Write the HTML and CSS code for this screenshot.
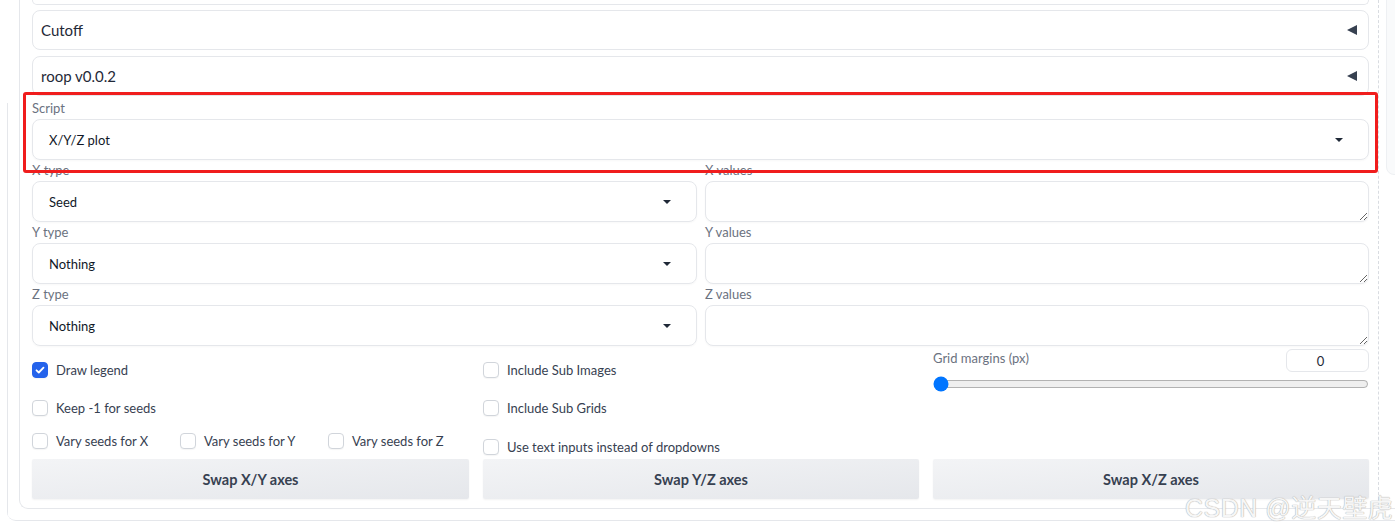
FILE: index.html
```html
<!DOCTYPE html>
<html lang="en">
<head>
    <meta charset="UTF-8">
    <meta name="viewport" content="width=device-width, initial-scale=1.0">
    <title>X/Y/Z plot</title>
    <link rel="stylesheet" href="styles.css">
</head>
<body>
    <div class="side-panel"></div>
    <div class="frame">
        <div class="panel">
            <div class="col">
                <div class="acc acc-cut"></div>
                <div class="acc"><span>Cutoff</span><i class="tri"></i></div>
                <div class="acc"><span>roop v0.0.2</span><i class="tri"></i></div>

                <div class="field script">
                    <label>Script</label>
                    <div class="select">X/Y/Z plot<i class="caret"></i></div>
                </div>

                <div class="axes">
                    <div class="field">
                        <label>X type</label>
                        <div class="select">Seed<i class="caret"></i></div>
                    </div>
                    <div class="field">
                        <label>X values</label>
                        <textarea></textarea>
                    </div>
                    <div class="field">
                        <label>Y type</label>
                        <div class="select">Nothing<i class="caret"></i></div>
                    </div>
                    <div class="field">
                        <label>Y values</label>
                        <textarea></textarea>
                    </div>
                    <div class="field">
                        <label>Z type</label>
                        <div class="select">Nothing<i class="caret"></i></div>
                    </div>
                    <div class="field">
                        <label>Z values</label>
                        <textarea></textarea>
                    </div>
                </div>

                <div class="options">
                    <div class="opt-col">
                        <div class="check"><span class="box checked"><svg viewBox="0 0 16 16" width="16" height="16"><path d="M4.5 8.3l2.3 2.2 4.7-4.8" fill="none" stroke="#fff" stroke-width="1.8" stroke-linecap="round" stroke-linejoin="round"/></svg></span>Draw legend</div>
                        <div class="check"><span class="box"></span>Keep -1 for seeds</div>
                        <div class="check-row">
                            <div class="check short"><span class="box"></span>Vary seeds for X</div>
                            <div class="check short"><span class="box"></span>Vary seeds for Y</div>
                            <div class="check short"><span class="box"></span>Vary seeds for Z</div>
                        </div>
                    </div>
                    <div class="opt-col">
                        <div class="check"><span class="box"></span>Include Sub Images</div>
                        <div class="check"><span class="box"></span>Include Sub Grids</div>
                        <div class="check last"><span class="box"></span>Use text inputs instead of dropdowns</div>
                    </div>
                    <div class="opt-col">
                        <div class="slider-head">
                            <label>Grid margins (px)</label>
                            <input type="number" value="0" class="num">
                        </div>
                        <input type="range" min="0" max="500" value="0" class="range">
                    </div>
                </div>

                <div class="buttons">
                    <button>Swap X/Y axes</button>
                    <button>Swap Y/Z axes</button>
                    <button>Swap X/Z axes</button>
                </div>
            </div>
        </div>
    </div>

    <div class="highlight"></div>
    <div class="watermark">CSDN @逆天壁虎</div>
</body>
</html>
```

FILE: styles.css
```css
*,
*:before,
*:after{
    box-sizing: border-box;
}

html, body{
    margin: 0;
    padding: 0;
    height: 100%;
}

body{
    position: relative;
    overflow: hidden;
    background: #fff;
    font-family: Lato, "Noto Sans", sans-serif;
    font-size: 14px;
    color: #374151;
}

.side-panel{
    position: absolute;
    top: -10px;
    left: 1386px;
    width: 40px;
    height: 185px;
    background: #f9fafb;
    border: 1px solid #eef0f3;
    border-radius: 8px;
}

.frame{
    margin-left: 7px;
    width: 1420px;
    height: 521px;
    padding: 0 0 11px 12px;
    border-bottom: 1px solid #e5e7eb;
    border-radius: 0 0 0 9px;
    background: linear-gradient(#e5e7eb, #e5e7eb) 0 103px / 1px 100% no-repeat;
}

.panel{
    height: 100%;
    border-left: 1px solid #e5e7eb;
    border-bottom: 1px solid #e5e7eb;
    border-radius: 0 0 0 9px;
    padding: 0 0 8px 12px;
}

.col{
    width: 1347px;
    height: 100%;
    padding-right: 9px;
    border-right: 1px dashed #d9dce1;
}

/* accordions */
.acc{
    display: flex;
    align-items: center;
    justify-content: space-between;
    height: 40px;
    margin-bottom: 6px;
    padding: 0 11px 0 8px;
    border: 1px solid #e5e7eb;
    border-radius: 8px;
    font-size: 15px;
    color: #1f2937;
}

.acc-cut{
    height: 5px;
    border-top: none;
    border-radius: 0 0 8px 8px;
    margin-bottom: 5px;
}

.tri{
    width: 0;
    height: 0;
    border-top: 5px solid transparent;
    border-bottom: 5px solid transparent;
    border-right: 10px solid #374151;
}

/* fields */
.field label,
.slider-head label{
    display: block;
    height: 18px;
    line-height: 18px;
    margin-bottom: 2px;
    font-size: 13px;
    color: #6b7280;
}

.field{
    margin-bottom: 1px;
}

.script{
    margin-top: -3px;
}

.select{
    display: flex;
    align-items: center;
    justify-content: space-between;
    height: 41px;
    padding: 0 25px 0 16px;
    border: 1px solid #e5e7eb;
    border-radius: 8px;
    font-size: 13px;
    color: #111827;
    box-shadow: 0 1px 2px rgba(0, 0, 0, .03);
}

.caret{
    width: 0;
    height: 0;
    border-left: 4px solid transparent;
    border-right: 4px solid transparent;
    border-top: 4px solid #1f2937;
}

.axes{
    display: grid;
    grid-template-columns: 665px 664px;
    column-gap: 8px;
}

textarea{
    display: block;
    width: 100%;
    height: 41px;
    margin: 0;
    border: 1px solid #e5e7eb;
    border-radius: 8px;
    font-family: inherit;
    resize: vertical;
    box-shadow: 0 1px 2px rgba(0, 0, 0, .03);
}

/* options */
.options{
    display: grid;
    grid-template-columns: 437px 436px 436px;
    column-gap: 14px;
    padding-top: 4px;
}

.check{
    display: flex;
    align-items: center;
    height: 38px;
    font-size: 13px;
    color: #374151;
}

.check.short{
    flex: 0 0 148px;
    height: 28px;
}

.check.last{
    height: 24px;
    margin-top: 8px;
}

.check-row{
    display: flex;
}

.box{
    display: inline-block;
    flex: 0 0 16px;
    width: 16px;
    height: 16px;
    margin-right: 8px;
    border: 1px solid #d1d5db;
    border-radius: 4px;
    background: #fff;
    box-shadow: 0 1px 1px rgba(0, 0, 0, .04);
}

.box svg{
    display: block;
    margin: -1px;
}

.box.checked{
    background: #2563eb;
    border-color: #2563eb;
}

.slider-head{
    display: flex;
    justify-content: space-between;
    height: 23px;
    margin-top: -2px;
}

.num{
    width: 83px;
    height: 23px;
    margin: 0;
    padding: 0 14px 0 0;
    border: 1px solid #e5e7eb;
    border-radius: 6px;
    text-align: center;
    font-family: inherit;
    font-size: 13px;
    color: #1f2937;
    -moz-appearance: textfield;
}

.num::-webkit-inner-spin-button,
.num::-webkit-outer-spin-button{
    -webkit-appearance: none;
    margin: 0;
}

.range{
    display: block;
    width: 100%;
    margin: 4px 0 0;
    accent-color: #0075ff;
}

/* buttons */
.buttons{
    display: grid;
    grid-template-columns: 437px 436px 436px;
    column-gap: 14px;
}

.buttons button{
    height: 40px;
    border: none;
    border-radius: 2px;
    background: linear-gradient(to bottom right, #f3f4f6, #e5e7eb);
    font-family: inherit;
    font-size: 14.5px;
    font-weight: 700;
    color: #374151;
    box-shadow: 0 1px 2px rgba(0, 0, 0, .05);
}

/* overlay annotation and watermark */
.highlight{
    position: absolute;
    left: 23px;
    top: 92px;
    width: 1355px;
    height: 81px;
    border: 3px solid #f01d1d;
    border-radius: 3px;
}

.watermark{
    position: absolute;
    left: 1185px;
    top: 488px;
    font-family: "Liberation Sans", "Noto Sans CJK SC", sans-serif;
    font-size: 25px;
    color: #f6f6f6;
    text-shadow: 0 0 1px #b0b0b0, 0 0 1px #b0b0b0;
    letter-spacing: 0.5px;
    white-space: nowrap;
}
```
